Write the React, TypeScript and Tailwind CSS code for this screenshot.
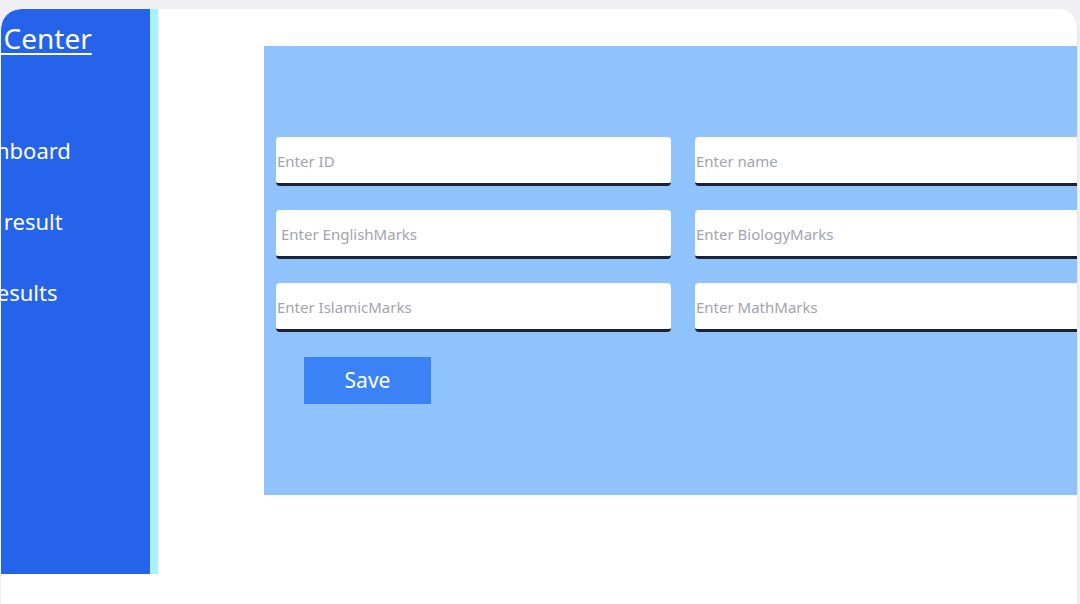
import { FC } from "react";

const font = { fontFamily: '"Noto Sans", "Open Sans", sans-serif' };

const Field: FC<{ placeholder: string; pad?: string }> = ({ placeholder, pad = "pl-[1px]" }) => (
  <input
    placeholder={placeholder}
    className={`h-[49px] w-[395px] shrink-0 bg-white rounded-[4px] border-b-[3px] border-[#1a2236] ${pad} pt-[2px] text-[15px] text-gray-700 placeholder:text-[#a3a3ab] outline-none`}
  />
);

export default function App() {
  return (
    <div className="w-[1080px] h-[604px] bg-[#f0f0f2] pt-[9px] pl-[1px] pr-[2px] overflow-hidden" style={font}>
      <div className="h-[595px] bg-white rounded-tl-[20px] rounded-tr-[18px] flex overflow-hidden border-r border-[#e4e6ea]">
        <aside className="w-[157px] h-[565px] shrink-0 bg-[#2563eb] border-r-8 border-[#a5f3fc] rounded-tl-[20px] overflow-hidden text-white">
          <div className="ml-[-86px] mt-[8px] text-[28px] underline underline-offset-[4px] decoration-[2px] whitespace-nowrap">
            Result Center
          </div>
          <ul className="ml-[-44px] mt-[75px] flex flex-col gap-[38px] text-[22px] whitespace-nowrap">
            <li>Dashboard</li>
            <li>Add result</li>
            <li>All results</li>
          </ul>
        </aside>
        <main className="flex-1 overflow-hidden">
          <section className="ml-[106px] mt-[37px] w-[830px] h-[449px] bg-[#90c3fb] pl-[12px] pt-[91px]">
            <div className="flex flex-col gap-[24px]">
              <div className="flex gap-[24px]">
                <Field placeholder="Enter ID" />
                <Field placeholder="Enter name" />
              </div>
              <div className="flex gap-[24px]">
                <Field placeholder="Enter EnglishMarks" pad="pl-[5px]" />
                <Field placeholder="Enter BiologyMarks" />
              </div>
              <div className="flex gap-[24px]">
                <Field placeholder="Enter IslamicMarks" />
                <Field placeholder="Enter MathMarks" />
              </div>
            </div>
            <button className="ml-[28px] mt-[25px] w-[127px] h-[47px] bg-[#3b82f6] text-white text-[21px]">
              Save
            </button>
          </section>
        </main>
      </div>
    </div>
  );
}
